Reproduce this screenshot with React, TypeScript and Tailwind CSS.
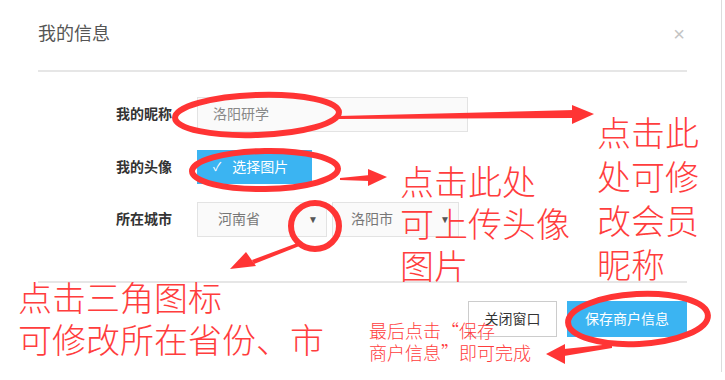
import React from 'react';

const cjk = { fontFamily: '"Liberation Sans", "Noto Sans CJK SC", sans-serif' };
const noteFont = { fontFamily: '"Noto Sans CJK SC", sans-serif' };

// 标注用的红色圈和箭头
const Marks = () => (
  <svg className="pointer-events-none absolute inset-0" width="725" height="380" viewBox="0 0 725 380">
    <g fill="none" stroke="#ff3434" strokeWidth="6">
      <ellipse cx="257" cy="115" rx="82" ry="20" transform="rotate(-2 257 115)" />
      <ellipse cx="265" cy="170" rx="73" ry="19" transform="rotate(-1 265 170)" />
      <ellipse cx="315" cy="226" rx="24" ry="23" />
      <ellipse cx="638" cy="319" rx="70" ry="25" transform="rotate(-3 638 319)" />
    </g>
    <g fill="#ff3434">
      <polygon points="338,116 574,110 574,118 338,119" />
      <polygon points="572,105 594,114 572,124" />
      <polygon points="340,178 370,175 370,181 340,180" />
      <polygon points="368,169 387,177 368,186" />
      <polygon points="300,242 252,260 254,264 302,245" />
      <polygon points="230,269 246,252 256,266" />
      <polygon points="612,344 564,349 564,356 612,348" />
      <polygon points="546,354 565,344 565,364" />
    </g>
  </svg>
);

const Note = ({ className, children }: { className: string; children: React.ReactNode }) => (
  <div className={`pointer-events-none absolute font-extralight text-[#ff3d3d] ${className}`} style={noteFont}>
    {children}
  </div>
);

export default function App() {
  return (
    <div className="relative h-[380px] w-[725px] overflow-hidden bg-white" style={cjk}>
      <div className="h-[372px] w-[722px] border-r border-[#dcdcdc] pl-[38px] pr-[34px]">
        {/* 头部 */}
        <div className="flex h-[72px] items-center justify-between border-b-2 border-[#e6e6e6] pb-[2px]">
          <div className="text-[18px] text-[#555]">我的信息</div>
          <div className="mr-[2px] text-[20px] leading-none text-[#c4c4c4]">×</div>
        </div>

        {/* 表单 */}
        <div className="flex flex-col gap-[18px] pt-[25px]">
          <div className="flex items-center">
            <div className="w-[159px] pr-[25px] text-right text-[14px] font-bold text-[#333]">我的昵称</div>
            <div className="flex h-[35px] w-[271px] items-center border border-[#e3e3e3] bg-[#fafafa] px-[15px] text-[14px] text-[#888]">
              洛阳研学
            </div>
          </div>
          <div className="flex items-center">
            <div className="w-[159px] pr-[25px] text-right text-[14px] font-bold text-[#333]">我的头像</div>
            <div className="flex h-[34px] w-[115px] items-center gap-[11px] bg-[#3bb4f2] px-[16px] text-[14px] text-white">
              <span className="text-[12px]">✓</span>
              <span>选择图片</span>
            </div>
          </div>
          <div className="flex items-center">
            <div className="w-[159px] pr-[25px] text-right text-[14px] font-bold text-[#333]">所在城市</div>
            <div className="flex gap-[5px]">
              <div className="flex h-[35px] w-[130px] items-center justify-between border border-[#e3e3e3] bg-[#fafafa] pl-[20px] pr-[8px] text-[14px] text-[#777]">
                <span>河南省</span>
                <span className="text-[10px] text-[#555]">▼</span>
              </div>
              <div className="flex h-[35px] w-[127px] items-center justify-between border border-[#e3e3e3] bg-[#fafafa] pl-[18px] pr-[8px] text-[14px] text-[#777]">
                <span>洛阳市</span>
                <span className="text-[10px] text-[#555]">▼</span>
              </div>
            </div>
          </div>
        </div>

        {/* 底部 */}
        <div className="mt-[44px] flex justify-end gap-[10px] border-t-2 border-[#e6e6e6] pt-[18px]">
          <div className="flex h-[36px] w-[89px] items-center justify-center border border-[#ccc] bg-white text-[14px] text-[#333]">
            关闭窗口
          </div>
          <div className="flex h-[36px] w-[120px] items-center justify-center bg-[#3bb4f2] text-[14px] text-white">
            保存商户信息
          </div>
        </div>
      </div>

      <Marks />

      <Note className="left-[597px] top-[110px] w-[110px] text-[34px] leading-[44px]">
        点击此<br />处可修<br />改会员<br />昵称
      </Note>
      <Note className="left-[400px] top-[160px] text-[34px] leading-[42px]">
        点击此处<br />可上传头像<br />图片
      </Note>
      <Note className="left-[18px] top-[276px] text-[34px] leading-[42px]">
        点击三角图标<br />可修改所在省份、市
      </Note>
      <Note className="left-[369px] top-[319px] text-[18px] leading-[22px]">
        最后点击“保存<br />商户信息”即可完成
      </Note>
    </div>
  );
}
